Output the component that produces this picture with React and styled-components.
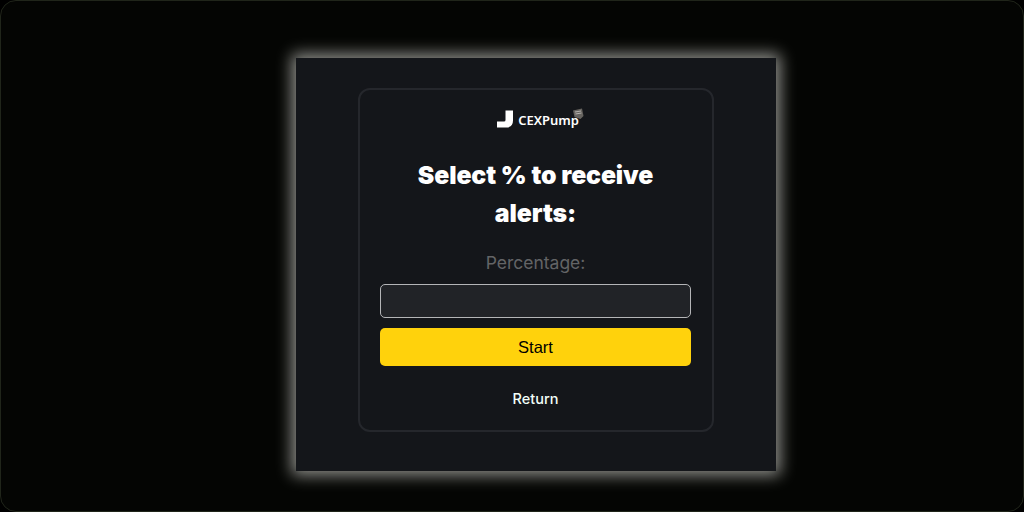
import React from "react";
import styled, { createGlobalStyle } from "styled-components";

const GlobalStyle = createGlobalStyle`
  html, body {
    margin: 0;
    padding: 0;
    background: #000;
  }
`;

const Frame = styled.div`
  box-sizing: border-box;
  width: 1024px;
  height: 512px;
  display: flex;
  justify-content: center;
  padding: 57px 0 0 48px;
  background: #040503;
  border: 1px solid #20251a;
  border-radius: 16px;
  overflow: hidden;
`;

const Panel = styled.main`
  box-sizing: border-box;
  width: 480px;
  height: 413px;
  padding: 30px 1px 0 0;
  display: flex;
  justify-content: center;
  background: #14161a;
  box-shadow: 0 0 15px 4px rgba(222, 222, 216, 0.66);
`;

const Card = styled.section`
  box-sizing: border-box;
  width: 356px;
  height: 344px;
  padding: 18px 21px 0;
  display: flex;
  flex-direction: column;
  align-items: center;
  border: 2px solid #25272c;
  border-radius: 12px;
  font-family: Inter, "Noto Sans", sans-serif;
`;

const Logo = styled.div`
  position: relative;
  margin-left: 4px;
  display: flex;
  align-items: center;
  gap: 4px;
  height: 22px;
  color: #fff;
  font-family: "Noto Sans", sans-serif;
  font-size: 13px;
  font-weight: 600;
`;

const LogoName = styled.span`
  position: relative;
  top: 1px;
`;

const Badge = styled.svg`
  position: absolute;
  top: 0;
  right: -5px;
`;

const Heading = styled.h1`
  margin: 26px 0 0;
  width: 270px;
  color: #fff;
  font-size: 24.8px;
  font-weight: 900;
  line-height: 38px;
  letter-spacing: -0.1px;
  text-align: center;
`;

const Label = styled.label`
  margin-top: 19px;
  color: #636466;
  font-size: 17.5px;
  line-height: 24px;
`;

const Input = styled.input`
  box-sizing: border-box;
  width: 311px;
  height: 34px;
  margin-top: 9px;
  background: #212327;
  border: 1px solid #b4b5b7;
  border-radius: 5px;
  outline: none;
`;

const StartButton = styled.button`
  width: 311px;
  height: 38px;
  margin-top: 10px;
  padding: 0;
  background: #ffd20c;
  border: 0;
  border-radius: 5px;
  color: #000;
  font-family: "Liberation Sans", Arial, sans-serif;
  font-size: 16.5px;
`;

const ReturnLink = styled.a`
  margin-top: 23px;
  color: #f2fff8;
  font-size: 14.5px;
  font-weight: 500;
  line-height: 20px;
`;

function LogoMark() {
  return (
    <svg width="18" height="18" viewBox="0 0 18 18">
      <path d="M9.5 0.5H17V10.5Q17 17.5 10 17.5H1V11.5H8Q9.5 11.5 9.5 10Z" fill="#fff" />
    </svg>
  );
}

function LogoBadge() {
  return (
    <Badge width="12" height="12" viewBox="0 0 12 12">
      <path d="M1 2.5L10 0.5L11.5 8L8.5 11L2.5 9Z" fill="#66635f" />
      <path d="M3 4L9 3M3.5 6L9.5 5" stroke="#c9c7c1" strokeWidth="0.8" />
    </Badge>
  );
}

export default function App() {
  return (
    <>
      <GlobalStyle />
      <Frame>
        <Panel>
          <Card>
            <Logo>
              <LogoMark />
              <LogoName>CEXPump</LogoName>
              <LogoBadge />
            </Logo>
            <Heading>Select % to receive alerts:</Heading>
            <Label htmlFor="percentage">Percentage:</Label>
            <Input id="percentage" />
            <StartButton>Start</StartButton>
            <ReturnLink>Return</ReturnLink>
          </Card>
        </Panel>
      </Frame>
    </>
  );
}
